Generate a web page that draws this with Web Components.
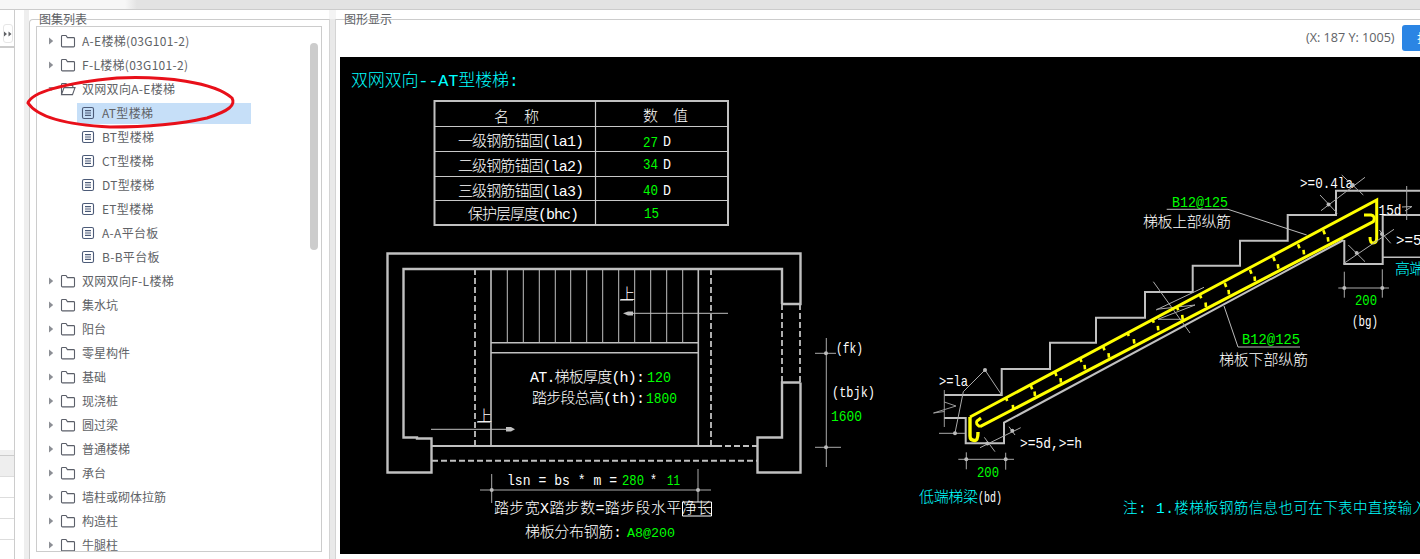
<!DOCTYPE html>
<html lang="zh"><head><meta charset="utf-8"><title>图集</title>
<style>
html,body{margin:0;padding:0;background:#fff;overflow:hidden}
body{font-family:"Noto Sans CJK SC","Noto Sans",sans-serif;font-size:12px;color:#606266}
tree-node.w{letter-spacing:.3px}
</style></head><body>
<app-shell>
  <side-rail slot="rail"></side-rail>
  <tree-panel slot="tree" heading="图集列表">
    <tree-node class="w" kind="folder">A-E楼梯(03G101-2)</tree-node>
    <tree-node class="w" kind="folder">F-L楼梯(03G101-2)</tree-node>
    <tree-node class="w" kind="open">双网双向A-E楼梯</tree-node>
    <tree-node class="w" kind="doc" selected>AT型楼梯</tree-node>
    <tree-node class="w" kind="doc">BT型楼梯</tree-node>
    <tree-node class="w" kind="doc">CT型楼梯</tree-node>
    <tree-node class="w" kind="doc">DT型楼梯</tree-node>
    <tree-node class="w" kind="doc">ET型楼梯</tree-node>
    <tree-node class="w" kind="doc">A-A平台板</tree-node>
    <tree-node class="w" kind="doc">B-B平台板</tree-node>
    <tree-node class="w" kind="folder">双网双向F-L楼梯</tree-node>
    <tree-node kind="folder">集水坑</tree-node>
    <tree-node kind="folder">阳台</tree-node>
    <tree-node kind="folder">零星构件</tree-node>
    <tree-node kind="folder">基础</tree-node>
    <tree-node kind="folder">现浇桩</tree-node>
    <tree-node kind="folder">圆过梁</tree-node>
    <tree-node kind="folder">普通楼梯</tree-node>
    <tree-node kind="folder">承台</tree-node>
    <tree-node kind="folder">墙柱或砌体拉筋</tree-node>
    <tree-node kind="folder">构造柱</tree-node>
    <tree-node kind="folder">牛腿柱</tree-node>
  </tree-panel>
  <drawing-panel slot="drawing" heading="图形显示" coords="(X: 187 Y: 1005)" action="打印">
    <cad-drawing></cad-drawing>
  </drawing-panel>
</app-shell>
<script>
function def(name, css, html, init){
  customElements.define(name, class extends HTMLElement{
    constructor(){super();const r=this.attachShadow({mode:'open'});
      r.innerHTML='<style>'+css+'</style>'+(typeof html==='function'?html(this):html);}
    connectedCallback(){ if(init) init(this); }
  });
}
def('app-shell',`
:host{display:flex;flex-direction:column;width:1420px;height:559px;position:relative;overflow:hidden;background:#fff}
.top{height:9px;flex:none;background:linear-gradient(90deg,#f7f7f7 0,#f7f7f7 125px,#e3e3e3 137px);border-bottom:1px solid #ccc}
.main{flex:1;display:flex;min-height:0}
.gap{width:9px;flex:none}
.split{width:5px;flex:none;background:#eee}
.cap{width:7px;flex:none;display:flex;flex-direction:column}
.cap i{height:9px;background:#f4f4f4;display:block}
.cap b{flex:1;background:#e9e9e9;border-left:1px solid #d4d4d4;border-right:1px solid #d4d4d4;display:block}
svg{position:absolute;left:0;top:0;pointer-events:none}
`,`<div class="top"></div><div class="main"><slot name="rail"></slot><div class="gap"></div><div class="split"></div><slot name="tree"></slot><div class="cap"><i></i><b></b></div><slot name="drawing"></slot></div>
<svg width="1420" height="559" viewBox="0 0 1420 559"><path d="M28 103C31 93 62 83 117 78C165 76 214 82 232 98C236 105 229 111 207 118C176 125 140 127 110 127C70 125 38 118 28 103Z" fill="none" stroke="#e8101a" stroke-width="3"/></svg>`);

def('side-rail',`
:host{display:flex;flex-direction:column;width:15px;flex:none;box-sizing:border-box;border-right:1px solid #ccc}
.head{height:38px;flex:none;border-bottom:2px solid #ccc;box-sizing:border-box;padding:14px 2px 0 3px}
.btn{height:19px;border:1px solid #e6e6e6;border-radius:3px;display:flex;align-items:center;justify-content:center;box-sizing:border-box;width:10px}
.fill{flex:1}
.band{height:5px;background:#f1f1f1;flex:none}
.row{height:21px;flex:none;border-bottom:1px solid #ddd;box-sizing:border-box}
.row.h{background:#eee;border-top:1px solid #ccc;height:22px}
.rest{flex:none;height:19px}
`,`<div class="head"><div class="btn"><svg width="8" height="6" viewBox="0 0 8 6"><path d="M0 0.5L3 3L0 5.5ZM4.5 0.5L7.5 3L4.5 5.5Z" fill="#606266"/></svg></div></div>
<div class="fill"></div><div class="band"></div><div class="row h"></div><div class="row"></div><div class="row"></div><div class="row"></div><div class="rest"></div>`);

def('tree-panel',`
:host{display:block;width:300px;flex:none;position:relative;box-sizing:border-box;margin-top:9px;border:1px solid #ccc;border-right:none;border-top-left-radius:4px;border-bottom:none;padding:6px 7px 6px 6px;height:540px}
.lg{position:absolute;left:9px;top:-9px;font-size:12px;line-height:15px;color:#606266}
.box{height:526px;border:1px solid #ccc;box-sizing:border-box;overflow:hidden;padding-top:2px;position:relative;width:286px}
.bar{position:absolute;left:273px;top:16px;width:8px;height:207px;background:#ccc;border-radius:4px}
`,h=>`<div class="lg">${h.getAttribute('heading')}</div><div class="box"><slot></slot><div class="bar"></div></div>`);

const ICONS={
 folder:'<svg width="16" height="14" viewBox="0 0 16 14"><path d="M1.5 3.6V2.4Q1.5 1.5 2.4 1.5H6L7.4 3.6H13.6Q14.5 3.6 14.5 4.5V12Q14.5 12.9 13.6 12.9H2.4Q1.5 12.9 1.5 12Z" fill="none" stroke="#5b5f69" stroke-width="1.1"/></svg>',
 open:'<svg width="16" height="14" viewBox="0 0 16 14"><path d="M1.5 12V2.4Q1.5 1.5 2.4 1.5H6L7.4 3.4H12.8V5.6M1.5 12.6L4 5.6H15L12.5 12.6Z" fill="none" stroke="#5b5f69" stroke-width="1.1"/></svg>',
 doc:'<svg width="14" height="14" viewBox="0 0 14 14"><rect x="1.5" y="1.5" width="11" height="11" rx="1.6" fill="none" stroke="#4c5b78" stroke-width="1.1"/><path d="M4 4.6H10M4 7H10M4 9.4H10" stroke="#4c5b78" stroke-width="1.1"/></svg>'
};
def('tree-node',`
:host{display:block;height:24px;position:relative;font-size:12px;color:#606266;line-height:24px;white-space:nowrap}
.r{display:flex;align-items:center;height:24px}
.a{width:12px;margin-left:11px;flex:none;display:flex}
.i{flex:none;display:flex;width:16px}
.t{margin-left:6px}
:host([kind=doc]) .r{margin-left:40px;padding-left:3.5px;height:21px;width:174px;box-sizing:border-box;position:relative;top:2px}
:host([kind=doc]) .i{width:14px;position:relative;top:-1px}
:host([selected]) .r{background:#c6dff8}
:host([kind=doc]) .t{margin-left:7.5px;position:relative;top:-1px}
`,h=>{const k=h.getAttribute('kind');
 const arrow=k==='doc'?'':(k==='open'
  ?'<div class="a"><svg width="8" height="8" viewBox="0 0 8 8"><path d="M0.5 2H6L3.2 6Z" fill="#8c8f95"/></svg></div>'
  :'<div class="a"><svg width="8" height="8" viewBox="0 0 8 8"><path d="M1 0.5L5.2 4L1 7.5Z" fill="#8c8f95"/></svg></div>');
 return `<div class="r">${arrow}<div class="i">${ICONS[k]}</div><div class="t"><slot></slot></div></div>`;});

def('drawing-panel',`
:host{display:flex;flex-direction:column;flex:1;min-width:0;position:relative;margin-top:9px;border-top:1px solid #ccc;padding-left:4px;height:540px;box-sizing:border-box}
.lg{position:absolute;left:8px;top:-9px;font-size:12px;line-height:15px;color:#606266}
.bar{height:37px;flex:none;display:flex;justify-content:flex-end;align-items:flex-start;overflow:hidden}
.co{font-size:12.6px;line-height:16px;margin-top:10px;color:#606266;font-family:"Open Sans","Noto Sans",sans-serif;width:90px;flex:none;white-space:nowrap}
.b{flex:none;width:18px;box-sizing:border-box;margin-left:6px;margin-top:5px;height:26px;background:#2b85e4;color:#fff;border-radius:3px 0 0 3px;font-size:12px;line-height:26px;padding-left:15px;overflow:hidden;white-space:nowrap}
.c{flex:none;height:497px;background:#000;overflow:hidden}
`,h=>`<div class="lg">${h.getAttribute('heading')}</div><div class="bar"><div class="co">${h.getAttribute('coords')}</div><div class="b">${h.getAttribute('action')}</div></div><div class="c"><slot></slot></div>`);

const G='#c0c0c0',Y='#ffff00',GR='#00ff00',C='#00ffff',W='#ffffff';
function P(d,w,c,extra){return `<path d="${d}" fill="none" stroke="${c||G}" stroke-width="${w||2}" ${extra||''}/>`;}
function T(x,y,w,s,c,sz){
 const adj=/[\u4e00-\u9fff]/.test(s)?'spacing':'spacingAndGlyphs';
 return `<text x="${x}" y="${y}" fill="${c||W}" font-size="${sz||(c===GR?14.5:15)}" textLength="${w}" lengthAdjust="${adj}" xml:space="preserve">${s}</text>`;}
function dot(x,y,r){return `<circle cx="${x}" cy="${y}" r="${r||2}" fill="#bbb"/>`;}
function drawing(){
 let s='';
 s+=T(351,86,168,'双网双向--AT型楼梯:',C,17);
 s+=P('M434.5 101H728V225H434.5Z',2);
 s+=P('M595.5 101V225M434 126.5H728M434 151.5H728M434 176.5H728M434 200.5H728',1.2,'#c8c8c8');
 s+=T(494,122,45,'名  称')+T(643,121,45,'数  值');
 s+=T(458,146,126,'一级钢筋锚固(la1)')+T(458,171,126,'二级钢筋锚固(la2)')+T(458,196,126,'三级钢筋锚固(la3)')+T(468,219,111,'保护层厚度(bhc)');
 s+=T(643,147,15,'27',GR)+T(663,146,8,'D')+T(643,169,15,'34',GR)+T(663,169,8,'D')+T(643,195,15,'40',GR)+T(663,195,8,'D')+T(644,218,15,'15',GR);
 s+=P('M782 304V269H403.5V437.5H417V438.5H431.5V472.5H387.5V253.5H800.5V304H782',2.4);
 s+=P('M800.5 382.5H782V437.5H757.5V472.5H800.5V382.5',2.4);
 s+=P('M782 304V382M800 304V382',1.8,G,'stroke-dasharray="6 3"');
 s+=P('M432 446H716',2)+P('M716 446H757',2,G,'stroke-dasharray="6 3"');
 s+=P('M432 460.7H757',2,G,'stroke-dasharray="6 3"');
 s+=P('M475 269V445M711 269V446',1.8,G,'stroke-dasharray="6 3"');
 s+=P('M491 269V446M698.3 269V446',1.6);
 s+=P('M491 342.7H698M491 352.7H698',1.6);
 let tr='';[507.3,523.3,539.3,555.3,570.7,586.7,602.7,618.7,634.7,650.7,666.7,682.7].forEach(x=>tr+=`M${x} 269V342`);
 s+=P(tr,1);
 s+=P('M630 313.3H728',1)+'<path d="M623 313.3L628 311.5H633V315.5H628Z" fill="#c0c0c0"/>';
 s+=P('M431 429.3H510',1)+'<path d="M515 429.3L511 427H506V431.5H511Z" fill="#c0c0c0"/>';
 s+=T(620,299,13,'上')+P('M620 300H633',1,W);
 s+=T(477,421,13,'上')+P('M477 422H490',1,W);
 s+=T(530,382,115,'AT.梯板厚度(h):')+T(647,382,24,'120',GR);
 s+=T(532,403,113,'踏步段总高(th):')+T(646,403,31,'1800',GR);
 s+=T(507,485,110,'lsn = bs * m =')+T(622,485,22,'280',GR)+T(650,485,7,'*')+T(667,485,13,'11',GR);
 s+=P('M480 490H711M491.7 474V503M698 469V502',1,'#aaa')+dot(491.7,490)+dot(698,490);
 s+=T(494,513,218,'踏步宽X踏步数=踏步段水平净长');
 s+=P('M682.5 502H711.5V516H682.5Z',1,W);
 s+=T(525,537,97,'梯板分布钢筋:')+T(627,537,48,'A8@200',GR,13);
 s+=P('M826.3 338V467M815 353.3H836M815 447.3H841',1,'#aaa')+dot(826,353.3)+dot(826,447.3);
 s+=T(836,353,27,'(fk)')+T(832,397,43,'(tbjk)')+T(831,421,31,'1600',GR);
 s+=P('M944.3 395H1001.7V369H1050V342.7H1096V317.7H1145V292H1192.7V265.7H1240V240.7H1287.7V215H1336V190.7H1420',2);
 s+=P('M1420 215H1382.7V264H1344.3V240',2)+P('M1382.7 257.3H1420',1.5);
 s+=P('M1343.5 240L1004 422.7V443.3H965.7V418H944',2);
 s+=P('M944.3 390V427M944.3 402L956 406L933.5 413L944.3 411.5',.9,'#aaa');
 s+=P('M1153.3 281.7L1190 333M1156 310L1204 287.3M1156.7 309.3L1195 305L1158 319.3L1188 319.3',1,'#aaa');
 s+=P('M970 417L1376.7 200V238Q1376.7 243 1373 243Q1370 243 1370 237',3,Y);
 s+=P('M970 417V436Q970 440.5 975 440.5Q978 440.5 978 432',3.4,Y);
 s+=P('M980 426.7L1373.3 221.7Q1376 216 1371 215L1364 215',3,Y);
 s+=P('M980 426.7Q975 424 977 421L981 418',3,Y);
 const up=[[1006.7,400],[1031.7,388.3],[1056,375],[1081,361],[1104,349.3],[1128.3,335],[1153.3,321.7],[1177.7,309.3],[1200.7,297.3],[1225.7,286],[1251,272.7],[1274.3,260],[1299,247.3],[1324.3,233.3]];
 const lo=[[1013.3,408.3],[1035,395],[1061,381.7],[1085,368.3],[1109,356.7],[1134.3,342.7],[1158.3,329.3],[1182.7,318.3],[1206,306],[1229,293.3],[1255,280],[1278.3,267.7],[1304,253.3],[1328.3,240.7]];
 up.forEach(p=>{s+=P(`M${p[0]-1} ${p[1]-3}L${p[0]+.5} ${p[1]+1}`,2.6,Y);});
 lo.forEach(p=>{s+=P(`M${p[0]-.5} ${p[1]-3.5}L${p[0]} ${p[1]+1}`,2.6,Y);});
 s+=T(1172,207,56,'B12@125',GR)+P('M1166.7 209.3H1228L1306.7 235',1,'#bbb');
 s+=T(1143,227,88,'梯板上部纵筋');
 s+=T(1242,344,58,'B12@125',GR)+P('M1238 347H1300M1238 347L1224 306',1,'#bbb');
 s+=T(1219,365,89,'梯板下部纵筋');
 s+=T(1300,188,53,'&gt;=0.4la');
 s+=T(1378.5,215,23,'15d');
 s+=T(1396,245,34,'&gt;=5d');
 s+=T(1395,274,58,'高端梯梁',C);
 s+=T(1355,305,22,'200',GR)+T(1352,326,26,'(bg)');
 s+=P('M1338.3 288H1389M1344.3 271.7V297.7M1382.3 269.3V297.7',1,'#aaa')+dot(1344.3,288)+dot(1382.3,288);
 s+=P('M1321 210.7L1365 177.3M1320 195L1337.3 213.3M1341.7 175L1363.3 195',1,'#aaa')+dot(1328.5,204.5)+dot(1352.7,185);
 s+=P('M1343 264L1394 229.3M1348.3 245L1365 261.7M1379.3 230L1390.7 243.3',1,'#aaa')+dot(1356.7,253)+dot(1382,234);
 s+=P('M1406.7 186V220M1402 207L1412 206.5L1405 211',1,'#aaa');
 s+=T(939,386,29,'&gt;=la');
 s+=P('M985 370L963.3 391.7L955 433M985 370L1001.7 395M939 433.3H965',1,'#aaa')+dot(985,370)+dot(955,433.3);
 s+=T(1020,448,62,'&gt;=5d,&gt;=h');
 s+=P('M980 447.7L1020.7 427.7M984.3 437.3L995 451.7M1009 426.7L1015 435',1,'#aaa')+dot(987.3,443.5)+dot(1012.3,430.7);
 s+=P('M958.3 459.3H1014M966.3 452.3V469.3M1005.7 452.7V469.7',1,'#aaa')+dot(966.3,459.3)+dot(1005.7,459.3);
 s+=T(977,477,22,'200',GR);
 s+=T(919,502,59,'低端梯梁',C)+T(978,502,24,'(bd)');
 s+=T(1123,513,304,'注: 1.楼梯板钢筋信息也可在下表中直接输入',C,14.5);
 return s;
}
def('cad-drawing',`
:host{display:block;width:1080px;height:497px;background:#000}
svg{display:block;font-family:"Liberation Mono","Noto Sans CJK SC",monospace;font-weight:300}
`,()=>`<svg width="1080" height="497" viewBox="340 57 1080 497">${drawing()}</svg>`);
</script>
</body></html>
